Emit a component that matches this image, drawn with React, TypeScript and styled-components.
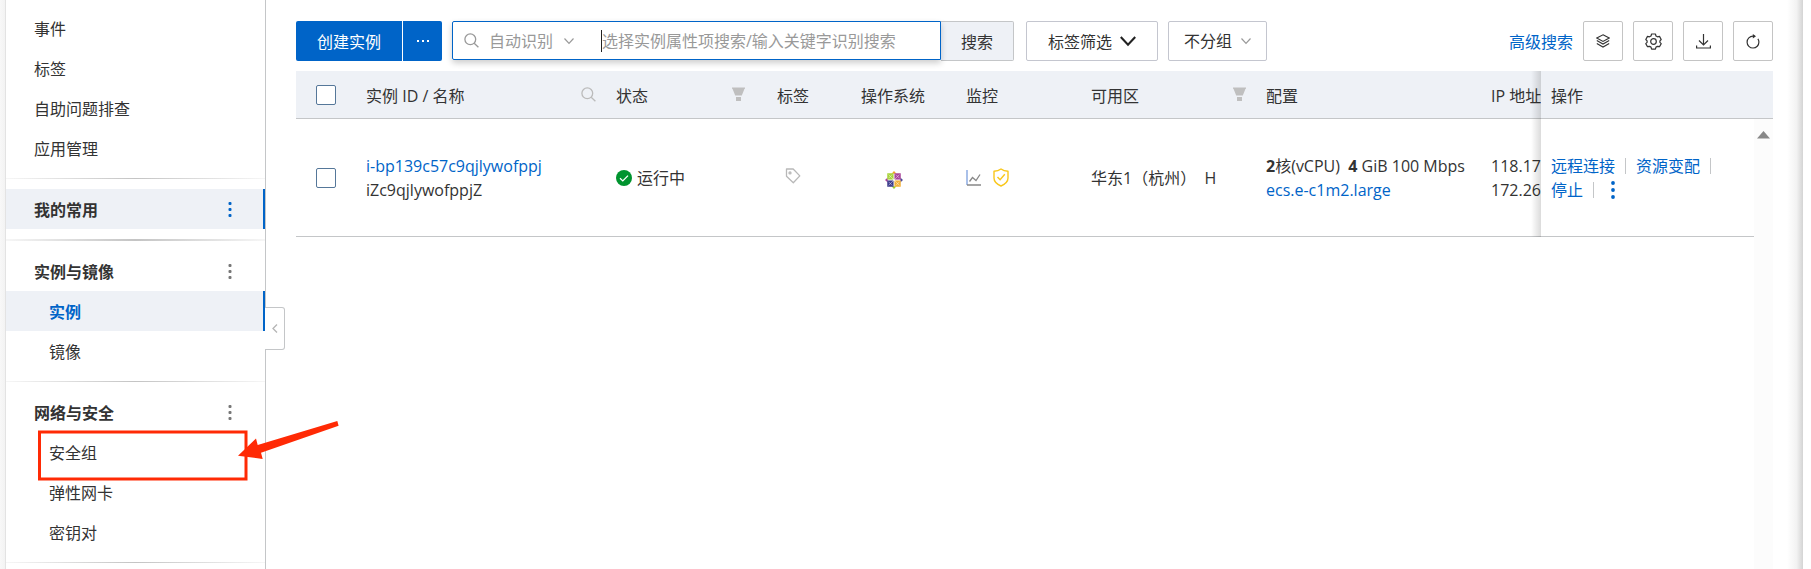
import React from "react";
import styled, { createGlobalStyle, css } from "styled-components";

const Global = createGlobalStyle`
  * { box-sizing: border-box; }
  body { margin: 0; background: #fff; }
  body, button, input, select {
    font-family: "Open Sans", "Noto Sans CJK SC", sans-serif;
    font-size: 16px;
    color: #333;
  }
  a { color: #0064c8; text-decoration: none; }
  button { cursor: pointer; }
`;

const Page = styled.div`
  display: flex;
  min-height: 100vh;
  padding-left: 5px;
  background: linear-gradient(90deg, #f8f8f8, #f3f3f3 5px, #fff 5px);
`;

const Sidebar = styled.nav`
  position: relative;
  flex: 0 0 261px;
  padding-top: 8px;
  border-left: 1px solid #e3e3e3;
  border-right: 1px solid #c4c6c8;
  background: #fff;
`;

const NavList = styled.ul`
  list-style: none;
  margin: 0;
  padding: 0;
`;

const Divider = styled.hr<{ $thick?: boolean }>`
  height: ${(p) => (p.$thick ? 2 : 1)}px;
  margin: 10px 0;
  border: 0;
  background: linear-gradient(90deg, #f6f6f6, #c4c4c4 50%, #f6f6f6);
`;

const activeRow = css`
  background: #eef1f6;
  border-right: 2px solid #0064c8;
`;

const NavLink = styled.a<{ $nested?: boolean; $active?: boolean }>`
  display: flex;
  align-items: center;
  height: 40px;
  padding-left: ${(p) => (p.$nested ? 43 : 28)}px;
  color: ${(p) => (p.$active ? "#0064c8" : "#333")};
  font-weight: ${(p) => (p.$active ? 700 : 400)};
  ${(p) => p.$active && activeRow}
`;

const GroupHeader = styled.div<{ $active?: boolean }>`
  display: flex;
  align-items: center;
  justify-content: space-between;
  height: 40px;
  padding: 0 ${(p) => (p.$active ? 24 : 26)}px 0 28px;
  font-weight: 700;
  ${(p) => p.$active && activeRow}
`;

const MoreButton = styled.button<{ $active?: boolean }>`
  display: grid;
  place-items: center;
  width: 18px;
  height: 24px;
  padding: 0;
  border: 0;
  background: none;
  color: ${(p) => (p.$active ? "#0064c8" : "#777")};
`;

const Highlighted = styled.li`
  position: relative;
`;

const Marker = styled.svg`
  position: absolute;
  top: -4px;
  left: 30px;
  z-index: 2;
  overflow: visible;
  pointer-events: none;
`;

const Collapse = styled.button`
  position: absolute;
  top: 307px;
  right: -20px;
  display: grid;
  place-items: center;
  width: 20px;
  height: 43px;
  padding: 0;
  border: 1px solid #c4c6c8;
  border-left: 0;
  border-radius: 0 3px 3px 0;
  background: #fff;
  color: #b5b5b5;
`;

const Main = styled.main`
  flex: 1;
  min-width: 0;
  padding: 21px 14px 0 30px;
`;

const PageEdge = styled.div`
  flex: 0 0 24px;
  border-right: 8px solid #fff;
  background: linear-gradient(90deg, #fff, #f2f2f2 60%, #d4d4d4);
`;

const Toolbar = styled.div`
  display: flex;
  align-items: center;
  height: 40px;
  margin-bottom: 10px;
`;

const PrimaryButton = styled.button<{ $width: number; $side: "left" | "right" }>`
  display: grid;
  place-items: center;
  width: ${(p) => p.$width}px;
  height: 40px;
  padding: 0;
  border: 0;
  border-radius: ${(p) => (p.$side === "left" ? "2px 0 0 2px" : "0 2px 2px 0")};
  margin-right: ${(p) => (p.$side === "left" ? 1 : 10)}px;
  background: #0064c8;
  color: #fff;
`;

const SearchBox = styled.form`
  display: flex;
  height: 40px;
  margin-right: 12px;
`;

const SearchField = styled.div`
  display: flex;
  align-items: center;
  width: 489px;
  height: 39px;
  padding-left: 11px;
  border: 1px solid #0064c8;
  border-radius: 2px 0 0 2px;
  box-shadow: 0 3px 6px rgba(0, 0, 0, 0.2);
  color: #999;
  z-index: 1;
`;

const PickerWrap = styled.label`
  display: flex;
  align-items: center;
`;

const PlainSelect = styled.select`
  appearance: none;
  padding: 0;
  border: 0;
  outline: 0;
  background: none;
  color: #333;
`;

const PickerSelect = styled(PlainSelect)`
  margin: 0 10px;
  color: #999;
`;

const Caret = styled.span`
  width: 1px;
  height: 22px;
  margin-left: 27px;
  background: #222;
`;

const SearchInput = styled.input`
  flex: 1;
  min-width: 0;
  padding: 0;
  border: 0;
  outline: 0;
  background: none;
  &::placeholder { color: #999; opacity: 1; }
`;

const SearchButton = styled.button`
  width: 73px;
  height: 40px;
  padding: 0;
  border: 1px solid #c4c6c8;
  border-left: 0;
  border-radius: 0 2px 2px 0;
  background: #eef1f6;
`;

const outlined = css`
  display: flex;
  align-items: center;
  justify-content: center;
  gap: 8px;
  height: 40px;
  margin-right: 10px;
  padding: 0;
  border: 1px solid #c4c6cf;
  border-radius: 2px;
  background: #fff;
`;

const FilterButton = styled.button`
  ${outlined}
  width: 132px;
`;

const GroupPicker = styled.label`
  ${outlined}
  width: 99px;
`;

const Tools = styled.div`
  display: flex;
  align-items: center;
  gap: 10px;
  margin-left: auto;
`;

const IconButton = styled.button`
  display: grid;
  place-items: center;
  width: 40px;
  height: 40px;
  padding: 0;
  border: 1px solid #c4c4c4;
  border-radius: 2px;
  background: #fff;
`;

const TableArea = styled.div`
  overflow: hidden;
`;

const Table = styled.table`
  width: 100%;
  table-layout: fixed;
  border-collapse: separate;
  border-spacing: 0;
`;

const Col = styled.col<{ $width: number }>`
  width: ${(p) => p.$width}px;
`;

const Th = styled.th`
  height: 48px;
  padding: 0;
  border-bottom: 1px solid #c4c6c8;
  background: #eef1f6;
  font-weight: 400;
  text-align: left;
  white-space: nowrap;
`;

const Td = styled.td`
  height: 118px;
  padding: 0;
  border-bottom: 1px solid #c4c6c8;
  line-height: 24px;
  white-space: nowrap;
`;

const ClipTh = styled(Th)`
  overflow: hidden;
`;

const ClipTd = styled(Td)`
  overflow: hidden;
`;

const stickyEdge = css`
  position: relative;
  padding-left: 10px;
  &::before {
    content: "";
    position: absolute;
    top: 0;
    bottom: -1px;
    left: -10px;
    width: 10px;
    background: linear-gradient(90deg, transparent, rgba(0, 0, 0, 0.14));
  }
`;

const ActionTh = styled(Th)`
  ${stickyEdge}
`;

const ActionTd = styled(Td)`
  ${stickyEdge}
`;

const HeadCell = styled.div<{ $end: number }>`
  display: flex;
  align-items: center;
  justify-content: space-between;
  padding-right: ${(p) => p.$end}px;
`;

const Check = styled.input`
  appearance: none;
  display: block;
  width: 20px;
  height: 20px;
  margin: 0 0 0 20px;
  border: 1px solid #557799;
  border-radius: 2px;
  background: #fff;
`;

const Inline = styled.div<{ $gap: number }>`
  display: flex;
  align-items: center;
  gap: ${(p) => p.$gap}px;
`;

const Bar = styled.span`
  width: 1px;
  height: 16px;
  background: #c4c6c8;
`;

const TagCell = styled.div`
  display: flex;
  padding: 0 0 4px 8px;
`;

const SystemCell = styled.div`
  display: flex;
  padding: 4px 0 0 24px;
`;

const ScrollHead = styled.td`
  padding: 0;
  border-bottom: 1px solid #c4c6c8;
  background: #eef1f6;
`;

const ScrollTrack = styled.td`
  padding: 12px 0 0;
  background: #fcfcfc;
  vertical-align: top;
  text-align: center;
  line-height: 0;
`;

const TrackRest = styled.div`
  width: 19px;
  height: calc(100vh - 237px);
  margin-left: auto;
  background: #fcfcfc;
`;

const Dots = ({ size = 3 }: { size?: number }) => (
  <svg width="4" height="18" fill="currentColor">
    {[2, 8, 14].map((y) => (
      <rect key={y} x="0.5" y={y} width={size} height={size} rx="1" />
    ))}
  </svg>
);

const ActionDots = () => (
  <svg width="4" height="20" fill="currentColor">
    {[3, 10, 17].map((y) => (
      <circle key={y} cx="2" cy={y} r="1.9" />
    ))}
  </svg>
);

const Chevron = ({ size = 10, stroke = 1.2, color = "#999" }) => (
  <svg width={size} height={size} viewBox="0 0 10 10" fill="none" stroke={color} strokeWidth={stroke}>
    <path d="M.5 2.5 5 7.3 9.5 2.5" />
  </svg>
);

const Magnifier = ({ color }: { color: string }) => (
  <svg width="15" height="15" viewBox="0 0 15 15" fill="none" stroke={color} strokeWidth="1.3">
    <circle cx="6.3" cy="6.3" r="5.4" />
    <path d="m10.2 10.2 4.2 4" />
  </svg>
);

const Funnel = () => (
  <svg width="13" height="15" viewBox="0 0 13 15" fill="#bfbfbf">
    <path d="M0 .5h13v1.2H0zM.5 1.700h12L9.800 8.500H3.200zM4 10h5v4H4z" />
  </svg>
);

const Layers = () => (
  <svg width="14" height="15" viewBox="0 0 14 15" fill="none" stroke="#333" strokeWidth="1.1">
    <path d="M7 .8 13.2 4 7 7.4.8 4zM.8 6.6 7 10l6.2-3.4M.8 9.6 7 13l6.2-3.4" />
  </svg>
);

const Gear = () => (
  <svg width="17" height="17" viewBox="0 0 17 17" fill="none" stroke="#333" strokeWidth="1.2">
    <circle cx="8.5" cy="8.5" r="2.8" />
    <path
      strokeLinejoin="round"
      d="M6.600 1h3.800l.6 2 1.500.8 2-.4 1.700 3.100-1.300 1.400v1.400l1.300 1.300-1.700 3.100-2-.4-1.500.8-.6 2H6.600l-.6-2-1.500-.8-2 .4L.8 10.600l1.300-1.300V7.900L.8 6.500l1.700-3.100 2 .4L6 3z"
    />
  </svg>
);

const Download = () => (
  <svg width="15" height="15" viewBox="0 0 15 15" fill="none" stroke="#333" strokeWidth="1.2">
    <path d="M7.5 0v11M3 6.500 7.500 11 12 6.500M.6 11.500V14h13.800v-2.500" />
  </svg>
);

const Refresh = () => (
  <svg width="14" height="15" viewBox="0 0 14 15" fill="none" stroke="#333" strokeWidth="1.2">
    <path d="M8.500 2.200H7A5.900 5.900 0 1 0 12.900 8a6 6 0 0 0-1-3.200" />
    <path fill="#333" stroke="none" d="M6.800 0v4.400L10 2.200z" />
  </svg>
);

const Tag = () => (
  <svg width="16" height="16" viewBox="0 0 16 16" fill="none" stroke="#b8b8b8" strokeWidth="1.3">
    <path strokeLinejoin="round" d="M1.500 1h6.700l6.600 6.900-6.500 6.800L1.500 8.200z" />
    <circle cx="5" cy="4.900" r="1" />
  </svg>
);

const CentOS = () => (
  <svg width="18" height="18" viewBox="0 0 20 20">
    <path fill="#efa724" d="m10 0 2.800 3H7.200z" />
    <path fill="#4b4a96" d="m20 10-3 2.800V7.200z" />
    <path fill="#9ccd2a" d="m10 20-2.800-3h5.600z" />
    <path fill="#a8459a" d="m0 10 3-2.800v5.600z" />
    <path fill="#a9d33c" d="M2.500 2.500h7v7h-7z" />
    <path fill="#a8459a" d="M10.500 2.500h7v7h-7z" />
    <path fill="#3d3c8c" d="M2.500 10.500h7v7h-7z" />
    <path fill="#f2b03a" d="M10.500 10.500h7v7h-7z" />
    <path
      fill="none"
      stroke="#fff"
      strokeWidth=".8"
      opacity=".6"
      d="m4 4 12 12M16 4 4 16M4 8l4-4M12 4l4 4M4 12l4 4M12 16l4-4"
    />
  </svg>
);

const Chart = () => (
  <svg width="15" height="16" viewBox="0 0 15 16" fill="none">
    <path stroke="#85a5e0" d="M1 0v15" strokeWidth="1.4" />
    <path stroke="#888" strokeWidth="1.3" d="M1 15h14M3.500 11.500 6.500 7.500l3.500 3 4-6" />
  </svg>
);

const Shield = () => (
  <svg width="16" height="19" viewBox="0 0 16 19" fill="none" stroke="#f9c71c" strokeWidth="1.4">
    <path strokeLinejoin="round" d="M8 1c2 1.500 4.500 2.200 7 2.300V10c0 3.800-3 6.300-7 8-4-1.700-7-4.200-7-8V3.300C3.500 3.200 6 2.500 8 1z" />
    <path d="m4.500 9 2.600 2.800L11.800 6.300" />
  </svg>
);

const Running = () => (
  <svg width="16" height="16" viewBox="0 0 16 16">
    <circle cx="8" cy="8" r="8" fill="#00942f" />
    <path d="m4 8.200 2.800 2.700L12 5.600" stroke="#fff" strokeWidth="1.3" fill="none" />
  </svg>
);

const topLinks = ["事件", "标签", "自助问题排查", "应用管理"];
const columnWidths = [70, 250, 161, 84, 105, 125, 175, 225];

export default function App() {
  return (
    <>
      <Global />
      <Page>
        <Sidebar>
          <NavList>
            {topLinks.map((t) => (
              <li key={t}><NavLink href="#">{t}</NavLink></li>
            ))}
          </NavList>
          <Divider />
          <GroupHeader $active>
            我的常用
            <MoreButton $active aria-label="更多"><Dots /></MoreButton>
          </GroupHeader>
          <Divider $thick />
          <GroupHeader>
            实例与镜像
            <MoreButton aria-label="更多"><Dots /></MoreButton>
          </GroupHeader>
          <NavList>
            <li><NavLink href="#" $nested $active>实例</NavLink></li>
            <li><NavLink href="#" $nested>镜像</NavLink></li>
          </NavList>
          <Divider />
          <GroupHeader>
            网络与安全
            <MoreButton aria-label="更多"><Dots /></MoreButton>
          </GroupHeader>
          <NavList>
            <Highlighted>
              <NavLink href="#" $nested>安全组</NavLink>
              <Marker width="310" height="60" viewBox="0 0 310 60">
                <rect x="3.5" y="4" width="206.500" height="47" fill="none" stroke="#ff2a05" strokeWidth="3" />
                <path fill="#ff2a05" d="M202 27.700 220 10.600l1.700 6.400 79.600-24 1.300 4.700L225 24.700l1.700 6.300z" />
              </Marker>
            </Highlighted>
            <li><NavLink href="#" $nested>弹性网卡</NavLink></li>
            <li><NavLink href="#" $nested>密钥对</NavLink></li>
          </NavList>
          <Divider />
          <Collapse aria-label="收起">
            <svg width="6" height="9" viewBox="0 0 6 9" fill="none" stroke="currentColor" strokeWidth="1.3">
              <path d="M5 .5 1 4.500l4 4" />
            </svg>
          </Collapse>
        </Sidebar>
        <Main>
          <Toolbar>
            <PrimaryButton $width={106} $side="left">创建实例</PrimaryButton>
            <PrimaryButton $width={39} $side="right" aria-label="更多操作">
              <svg width="12" height="2" fill="currentColor">
                <path d="M0 0h2v2H0zM5 0h2v2H5zM10 0h2v2h-2z" />
              </svg>
            </PrimaryButton>
            <SearchBox onSubmit={(e) => e.preventDefault()}>
              <SearchField>
                <Magnifier color="#999" />
                <PickerWrap>
                  <PickerSelect aria-label="搜索类型" defaultValue="auto">
                    <option value="auto">自动识别</option>
                  </PickerSelect>
                  <Chevron />
                </PickerWrap>
                <Caret />
                <SearchInput aria-label="搜索实例" placeholder="选择实例属性项搜索/输入关键字识别搜索" />
              </SearchField>
              <SearchButton>搜索</SearchButton>
            </SearchBox>
            <FilterButton type="button">
              标签筛选
              <Chevron size={16} stroke={1.3} color="#222" />
            </FilterButton>
            <GroupPicker>
              <PlainSelect aria-label="分组" defaultValue="none">
                <option value="none">不分组</option>
              </PlainSelect>
              <Chevron />
            </GroupPicker>
            <Tools>
              <a href="#">高级搜索</a>
              <IconButton aria-label="视图"><Layers /></IconButton>
              <IconButton aria-label="设置"><Gear /></IconButton>
              <IconButton aria-label="下载"><Download /></IconButton>
              <IconButton aria-label="刷新"><Refresh /></IconButton>
            </Tools>
          </Toolbar>
          <TableArea>
            <Table>
              <colgroup>
                {columnWidths.map((w, i) => (
                  <Col key={i} $width={w} />
                ))}
                <col />
                <Col $width={213} />
                <Col $width={19} />
              </colgroup>
              <thead>
                <tr>
                  <Th><Check type="checkbox" aria-label="全选" /></Th>
                  <Th><HeadCell $end={20}>实例 ID / 名称<Magnifier color="#bbb" /></HeadCell></Th>
                  <Th><HeadCell $end={32}>状态<Funnel /></HeadCell></Th>
                  <Th>标签</Th>
                  <Th>操作系统</Th>
                  <Th>监控</Th>
                  <Th><HeadCell $end={20}>可用区<Funnel /></HeadCell></Th>
                  <Th>配置</Th>
                  <ClipTh>IP 地址</ClipTh>
                  <ActionTh>操作</ActionTh>
                  <ScrollHead />
                </tr>
              </thead>
              <tbody>
                <tr>
                  <Td><Check type="checkbox" aria-label="选择实例" /></Td>
                  <Td><a href="#">i-bp139c57c9qjlywofppj</a><br />iZc9qjlywofppjZ</Td>
                  <Td><Inline $gap={5}><Running />运行中</Inline></Td>
                  <Td><TagCell><Tag /></TagCell></Td>
                  <Td><SystemCell><CentOS /></SystemCell></Td>
                  <Td><Inline $gap={12}><Chart /><Shield /></Inline></Td>
                  <Td>华东1（杭州）&nbsp; H</Td>
                  <Td><b>2</b>核(vCPU)&nbsp; <b>4</b> GiB 100 Mbps<br /><a href="#">ecs.e-c1m2.large</a></Td>
                  <ClipTd>118.178<br />172.26.</ClipTd>
                  <ActionTd>
                    <Inline $gap={10}>
                      <a href="#">远程连接</a><Bar /><a href="#">资源变配</a><Bar />
                    </Inline>
                    <Inline $gap={10}>
                      <a href="#">停止</a><Bar />
                      <MoreButton $active aria-label="更多操作"><ActionDots /></MoreButton>
                    </Inline>
                  </ActionTd>
                  <ScrollTrack>
                    <svg width="13" height="8" fill="#888"><path d="M6.500 0 13 7.500H0z" /></svg>
                  </ScrollTrack>
                </tr>
              </tbody>
            </Table>
            <TrackRest />
          </TableArea>
        </Main>
        <PageEdge />
      </Page>
    </>
  );
}
